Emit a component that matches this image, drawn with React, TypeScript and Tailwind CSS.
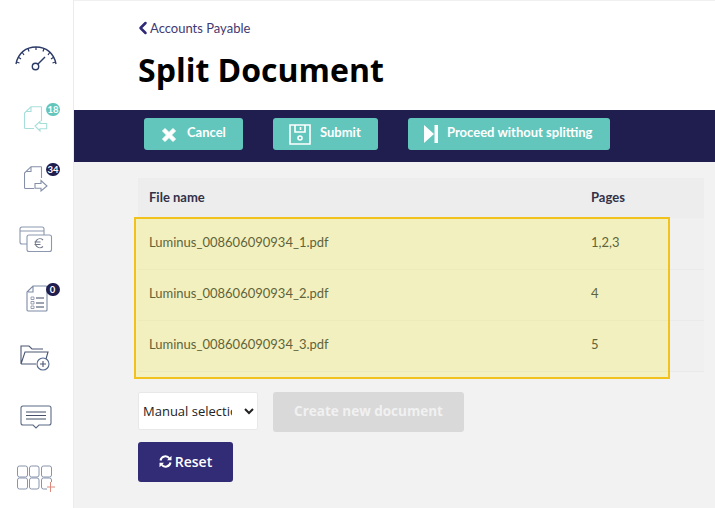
import { ChevronLeft } from "lucide-react";

const rows = [
  { name: "Luminus_008606090934_1.pdf", pages: "1,2,3" },
  { name: "Luminus_008606090934_2.pdf", pages: "4" },
  { name: "Luminus_008606090934_3.pdf", pages: "5" },
];

function Gauge() {
  return (
    <svg width="44" height="30" viewBox="0 0 44 30" fill="none" stroke="#2b3a67" strokeWidth="1.2">
      <path d="M2 21C4 10 12 4 22 4s18 6 20 17" strokeWidth="1.4" />
      <path d="M4 14l3 2M8 9l2 3M14 5.500l1 3M22 4v3M30 5.500l-1 3M36 9l-2 3M40 14l-3 2M2.500 19l3 1M41.500 19l-3 1" />
      <circle cx="21.500" cy="23.500" r="3.200" strokeWidth="1.400" />
      <path d="M24 21l7-7" strokeWidth="1.400" />
    </svg>
  );
}

function DocIn() {
  return (
    <svg width="24" height="26" viewBox="0 0 24 26" fill="none" stroke="#a6dfda" strokeWidth="1.100">
      <path d="M17.500 .7H7L.5 7v14.500a1 1 0 0 0 1 1H10M17.500 .7V15M7 1v4.500H2" />
      <path d="M22.700 17.500H16V15.500L11 20l5 5v-2.300h6.700z" />
    </svg>
  );
}

function DocOut() {
  return (
    <svg width="24" height="26" viewBox="0 0 24 26" fill="none" stroke="#8590a8" strokeWidth="1.100">
      <path d="M17.500 .7H7L.5 7v14.500a1 1 0 0 0 1 1H10M17.500 .7V12M7 1v4.500H2" />
      <path d="M11 17.500h6v-3l6 5.500-6 5v-2.800h-6z" />
    </svg>
  );
}

function Cards() {
  return (
    <svg width="34" height="27" viewBox="0 0 34 27" fill="none" stroke="#8b98b0" strokeWidth="1.100">
      <path d="M8 18H3a2 2 0 0 1-2-2V3a2 2 0 0 1 2-2h20a2 2 0 0 1 2 2v6M1 5h24" />
      <rect x="8" y="9" width="24.500" height="16.500" rx="2" />
      <path d="M24 14a4.500 4.500 0 1 0 0 6.500M15.500 16h6M15.500 18.500h6" stroke="#6f7687" />
    </svg>
  );
}

function Checklist() {
  return (
    <svg width="22" height="28" viewBox="0 0 22 28" fill="none" stroke="#7d8aa5" strokeWidth="1.100">
      <path d="M7 1h13a1 1 0 0 1 1 1v23a1 1 0 0 1-1 1H2a1 1 0 0 1-1-1V7zM7 1v6H2" />
      <path d="M5 12h3v2.500H5zM5 16.500h3V19H5zM5 21h3v2.500H5z" strokeWidth="0.800" />
      <path d="M10 13h8M10 18h8M10 22h8" stroke="#3c4660" />
    </svg>
  );
}

function FolderAdd() {
  return (
    <svg width="34" height="28" viewBox="0 0 34 28" fill="none" stroke="#4a5673" strokeWidth="1.100">
      <path d="M1 20V2h8l3 3h11M1 20l4-12h23l-2 7M1 20h15" />
      <circle cx="23" cy="20" r="6" fill="#fff" stroke="#56698e" />
      <path d="M23 17v6M20 20h6" />
    </svg>
  );
}

function Chat() {
  return (
    <svg width="32" height="26" viewBox="0 0 32 26" fill="none" stroke="#5d6a84" strokeWidth="1.100">
      <path d="M3 1h26a2 2 0 0 1 2 2v15a2 2 0 0 1-2 2H19l-3 3-3-3H3a2 2 0 0 1-2-2V3a2 2 0 0 1 2-2z" />
      <path d="M6 7h20M6 10.500h20M6 14h20" stroke="#46506a" />
    </svg>
  );
}

function Apps() {
  return (
    <svg width="38" height="29" viewBox="0 0 38 29" fill="none" stroke="#8895ad" strokeWidth="1">
      <rect x=".5" y="1" width="10" height="11" rx="2" />
      <rect x="12.500" y="1" width="9.500" height="11" rx="2" />
      <rect x="24.500" y="1" width="10" height="11" rx="2" />
      <rect x=".5" y="13" width="10" height="11" rx="2" />
      <rect x="12.500" y="13" width="9.500" height="11" rx="2" />
      <path d="M30 24h-3.500a2 2 0 0 1-2-2v-7a2 2 0 0 1 2-2h6a2 2 0 0 1 2 2v2" />
      <path d="M33.500 17v10M30 22h8" stroke="#d98a7c" />
    </svg>
  );
}

function Badge({ value, className }: { value: string; className: string }) {
  return (
    <span className={`absolute flex h-[13px] w-[14px] items-center justify-center rounded-full text-[9.500px] font-bold leading-none text-white ${className}`}>
      {value}
    </span>
  );
}

function CrossIcon() {
  return (
    <svg width="16" height="16" viewBox="0 0 16 16" fill="#fff" stroke="#fff" strokeWidth="1" strokeLinejoin="round">
      <path d="M4 1.500 8 5.500l4-4L14.500 4l-4 4 4 4-2.500 2.500-4-4-4 4L1.500 12l4-4-4-4z" />
    </svg>
  );
}

function SaveIcon() {
  return (
    <svg width="22" height="21" viewBox="0 0 22 21" fill="none" stroke="#fff" strokeWidth="1.600">
      <path d="M1 1h20v19H1zM6 1v7h10V1M11.500 3v3" />
      <circle cx="11" cy="14" r="2" />
    </svg>
  );
}

function SkipIcon() {
  return (
    <svg width="14" height="18" viewBox="0 0 14 18" fill="#fff">
      <path d="M0 0l10 9-10 9z" />
      <path d="M10.500 0H14v18h-3.500z" />
    </svg>
  );
}

function RefreshIcon() {
  return (
    <svg width="13" height="13" viewBox="0 0 13 13" fill="none" stroke="#fff" strokeWidth="2">
      <path d="M1.500 5.500A5 5 0 0 1 10.500 3.500M11.500 7.500A5 5 0 0 1 2.500 9.500" />
      <path d="M12.500 .7v4.500H8zM.5 12.300V7.800H5z" fill="#fff" stroke="none" />
    </svg>
  );
}

export default function App() {
  return (
    <div className="flex h-[508px] w-[715px] overflow-hidden bg-[#f2f2f2] font-['Lato',sans-serif] text-[#333]">
      <aside className="flex w-[74px] shrink-0 flex-col items-center border-r border-[#ececec] bg-white pt-[43px]">
        <div className="ml-[-2px]"><Gauge /></div>
        <div className="relative mt-[33px] ml-[-1px] h-[26px] w-[24px]">
          <DocIn />
          <Badge value="18" className="left-[22px] top-[-3px] bg-[#63c6bd]" />
        </div>
        <div className="relative mt-[34px] ml-[-1px] h-[26px] w-[24px]">
          <DocOut />
          <Badge value="34" className="left-[22px] top-[-3px] bg-[#201d4f]" />
        </div>
        <div className="mt-[34px] ml-[-2px]"><Cards /></div>
        <div className="relative mt-[32px] h-[28px] w-[22px]">
          <Checklist />
          <Badge value="0" className="left-[20px] top-[-2px] bg-[#201d4f]" />
        </div>
        <div className="mt-[31px] ml-[1px]"><FolderAdd /></div>
        <div className="mt-[33px] ml-[-1px]"><Chat /></div>
        <div className="mt-[34px] ml-[-2px]"><Apps /></div>
      </aside>

      <main className="flex min-w-0 flex-1 flex-col">
        <header className="h-[110px] border-t border-[#f0f0f0] bg-white pl-[64px]">
          <a className="mt-[17px] flex items-center text-[13px] leading-[16px] text-[#3f3a72]">
            <ChevronLeft className="ml-[-5px] mr-[-3px] h-[20px] w-[20px] shrink-0 text-[#2f2a75]" strokeWidth={3} />
            Accounts Payable
          </a>
          <h1 className="mt-[10px] font-['Open_Sans',sans-serif] text-[32px] font-bold leading-[44px] text-black">
            Split Document
          </h1>
        </header>

        <div className="flex h-[52px] items-start gap-[30px] bg-[#201d4f] pl-[70px] pt-[8px] text-[13px] font-bold text-white">
          <button className="flex h-[32px] w-[99px] items-center rounded-[3px] bg-[#63c6bd] pl-[17px]">
            <span className="mt-[2px]"><CrossIcon /></span>
            <span className="mb-[3px] ml-[10px]">Cancel</span>
          </button>
          <button className="flex h-[32px] w-[105px] items-center rounded-[3px] bg-[#63c6bd] pl-[16px]">
            <SaveIcon />
            <span className="mb-[3px] ml-[9px]">Submit</span>
          </button>
          <button className="flex h-[32px] w-[202px] items-center rounded-[3px] bg-[#63c6bd] pl-[16px]">
            <SkipIcon />
            <span className="mb-[3px] ml-[9px]">Proceed without splitting</span>
          </button>
        </div>

        <section className="relative flex-1 pl-[64px] pt-[16px]">
          <table className="w-[566px] border-collapse text-left text-[13px]">
            <thead>
              <tr className="h-[40px] bg-[#ededed] font-bold text-[#333147]">
                <th className="pl-[11px] font-bold">File name</th>
                <th className="w-[113px] pl-0 font-bold">Pages</th>
              </tr>
            </thead>
            <tbody>
              {rows.map((row) => (
                <tr key={row.name} className="h-[51px] border-b border-[#eaeaea] bg-[#f0f0f0] text-[#2b3340]">
                  <td className="pb-[2px] pl-[11px]">{row.name}</td>
                  <td className="pb-[2px]">{row.pages}</td>
                </tr>
              ))}
            </tbody>
          </table>

          <div className="absolute left-[60px] top-[55px] h-[162px] w-[536px] border-2 border-[#f1c21b] bg-[#fcf02a]/25" />

          <div className="mt-[20px] flex items-start gap-[15px]">
            <select className="h-[38px] w-[120px] rounded-[2px] border border-[#e8e8e8] bg-white pr-[9px] font-['Open_Sans',sans-serif] text-[13px] text-[#222]">
              <option>Manual selection</option>
            </select>
            <button className="h-[40px] w-[191px] rounded-[3px] bg-[#d9d9d9] font-['Open_Sans',sans-serif] text-[13.500px] font-bold text-[#f1f1f1]">
              Create new document
            </button>
          </div>
          <button className="mt-[10px] flex h-[40px] w-[95px] items-center justify-center gap-[3px] rounded-[3px] bg-[#322b75] font-['Open_Sans',sans-serif] text-[14px] font-semibold text-white">
            <RefreshIcon />
            Reset
          </button>
        </section>
      </main>
    </div>
  );
}
